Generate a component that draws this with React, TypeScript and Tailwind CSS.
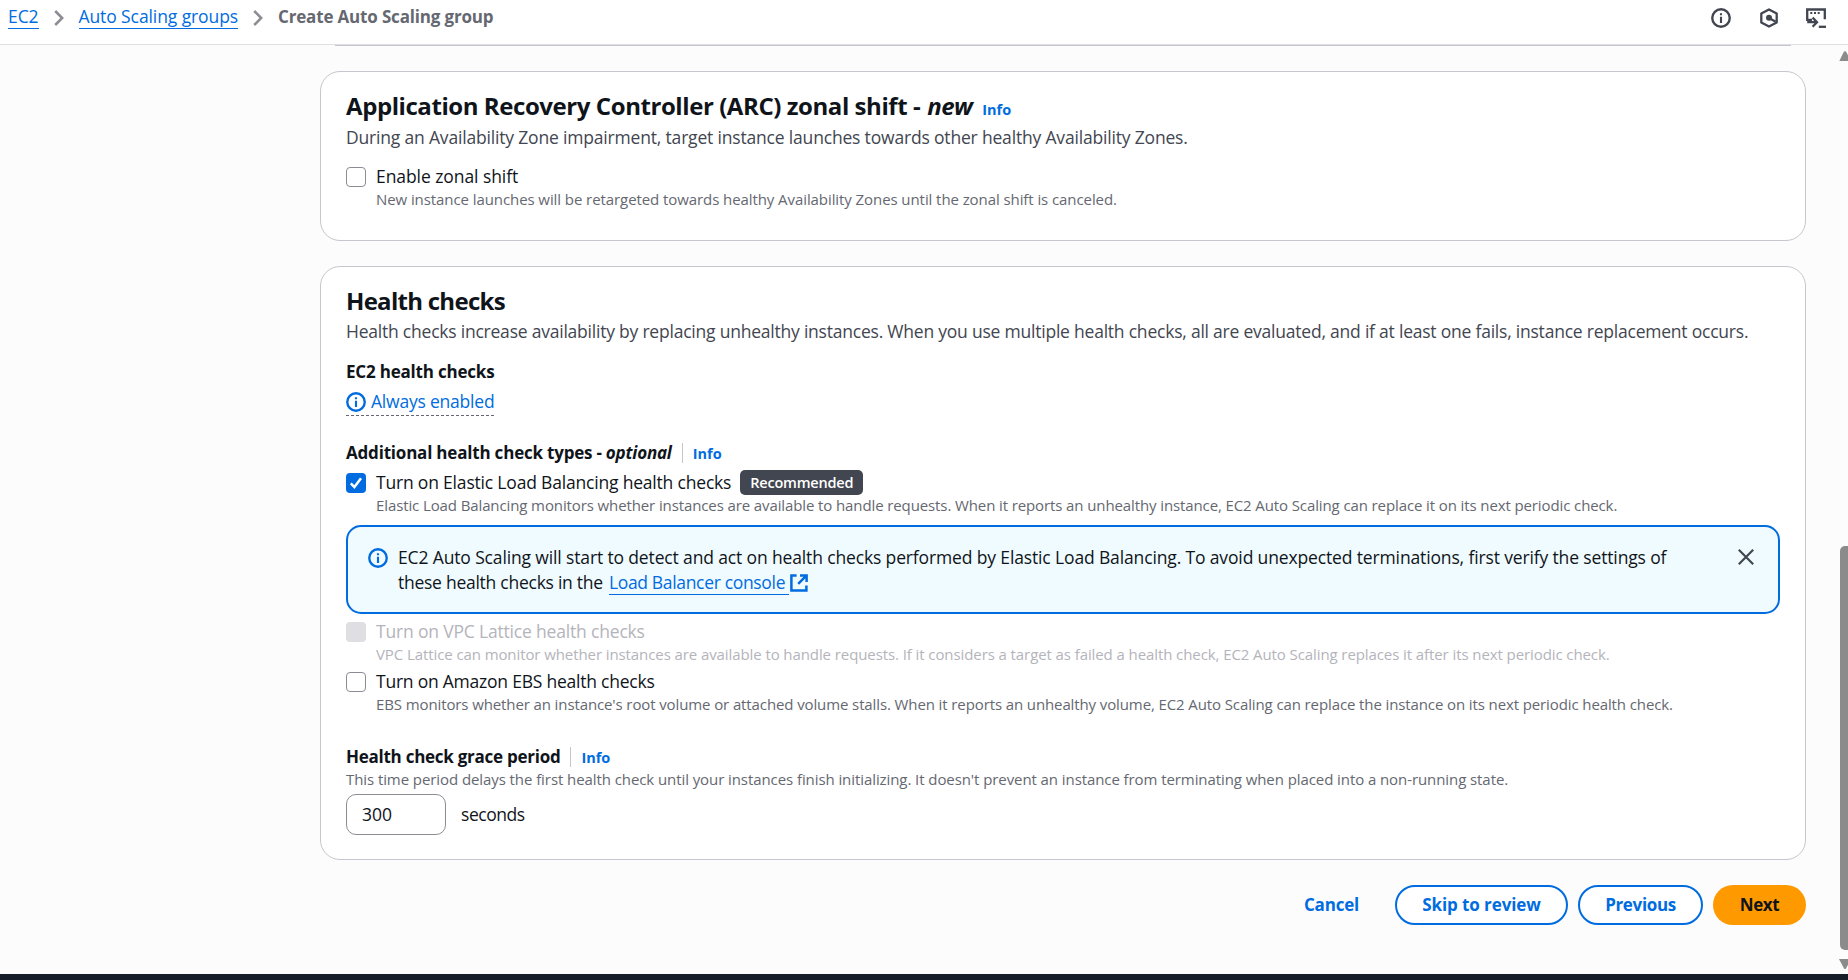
import React from 'react';
import type { ReactNode } from 'react';

const InfoIcon = ({ className }: { className: string }) => (
  <svg viewBox="0 0 16 16" fill="none" stroke="currentColor" strokeWidth="1.9" className={`shrink-0 ${className}`}>
    <circle cx="8" cy="8" r="7" />
    <path d="M8 7v4.9M8 4.1v1.7" strokeWidth="1.7" />
  </svg>
);

const HexagonIcon = () => (
  <svg viewBox="0 0 18 20" fill="none" stroke="currentColor" strokeWidth="2.3" className="h-5 w-[18px] shrink-0">
    <path d="M9 1.4 16.7 5.6v8.8L9 18.6 1.3 14.4V5.6z" strokeLinejoin="round" />
    <circle cx="9" cy="9.8" r="3" fill="currentColor" stroke="none" />
    <path d="m9.5 10.3 6.2 3.4" />
  </svg>
);

const ConsoleIcon = () => (
  <svg viewBox="0 0 20 20" fill="none" stroke="currentColor" strokeWidth="2.3" className="size-5 shrink-0">
    <path d="M6 11.8H1.2V1.5h17.6v9.7" />
    <path d="M4.3 5h2M8 5h2M11.7 5h2" strokeWidth="2" />
    <path d="M1.2 14.2h9M6.6 9.6l4.4 4.6-4.4 4.6" />
    <path d="M12.8 18.8H20" />
  </svg>
);

const ExternalIcon = () => (
  <svg viewBox="0 0 18 18" fill="none" stroke="currentColor" strokeWidth="2.5" className="size-[18px] shrink-0">
    <path d="M6.6 1.6H1.4v15h15v-5.2" />
    <path d="M10 1.4h6.6V8M16.3 1.7 8.2 9.8" />
  </svg>
);

const Chevron = () => (
  <svg viewBox="0 0 10 16" className="mt-1.5 h-4 w-2.5 shrink-0 self-start" fill="none" stroke="#8c8c94" strokeWidth="2.5">
    <path d="M1.2 1 8.2 8l-7 7" />
  </svg>
);

const InfoLink = () => <a className="text-[14.5px] font-bold text-[#006ce0]">Info</a>;

const Divider = () => <span className="h-5 w-px self-center bg-[#c6c6cd]" />;

function CheckRow({ state, label, desc, descClass, labelClass, badge }: {
  state: 'on' | 'off' | 'disabled';
  label: string;
  desc: string;
  descClass: string;
  labelClass: string;
  badge?: ReactNode;
}) {
  return (
    <div className="flex gap-2.5">
      {state === 'on' && (
        <span className="mt-1 size-5 shrink-0 rounded-[4px] bg-[#006ce0]">
          <svg viewBox="0 0 20 20" fill="none" stroke="#fff" strokeWidth="2.5">
            <path d="m4.8 10.4 3.6 3.7 6.6-8.8" />
          </svg>
        </span>
      )}
      {state === 'off' && <span className="mt-1 size-5 shrink-0 rounded-[4px] border border-[#8c8c94] bg-white" />}
      {state === 'disabled' && <span className="mt-1 size-5 shrink-0 rounded-[4px] bg-[#dedee3]" />}
      <div className={state === 'disabled' ? 'text-[#b4b4bb]' : 'text-[#656871]'}>
        <div className="flex h-[25px] items-start text-[17.5px] leading-[25px]">
          <span className={`pt-px ${labelClass} ${state === 'disabled' ? '' : 'text-[#0f141a]'}`}>{label}</span>
          {badge}
        </div>
        <p className={`mt-px text-[15px] leading-5 ${descClass}`}>{desc}</p>
      </div>
    </div>
  );
}

export default function App() {
  return (
    <div className="flex h-[980px] w-[1848px] flex-col overflow-hidden bg-[#fcfcfd] font-['Open_Sans','Noto_Sans',sans-serif] whitespace-nowrap text-[#0f141a]">
      <header className="flex h-[45px] shrink-0 items-start justify-between border-b border-[#dedee3] bg-white pt-1 pr-[22px] pl-2 text-[17.5px] leading-[25px]">
        <nav className="flex items-baseline">
          <a className="h-[25px] border-b border-[#006ce0] tracking-[-0.08px] text-[#006ce0]">EC2</a>
          <span className="flex w-[40px] justify-center self-start"><Chevron /></span>
          <a className="h-[25px] border-b border-[#006ce0] tracking-[-0.1px] text-[#006ce0]">Auto Scaling groups</a>
          <span className="flex w-10 justify-center self-start"><Chevron /></span>
          <span className="text-[17px] font-bold tracking-[-0.17px] text-[#656871]">Create Auto Scaling group</span>
        </nav>
        <div className="flex pt-1 text-[#424650]">
          <InfoIcon className="size-5" />
          <span className="mr-7 ml-[29px]"><HexagonIcon /></span>
          <ConsoleIcon />
        </div>
      </header>

      <div className="flex min-h-0 flex-1 justify-between">
        <main className="ml-[320px] w-[1486px]">
          <div className="mx-[15px] h-px bg-[#c6c6cd]" />

          <section className="mt-[25px] h-[170px] rounded-[20px] border border-[#c6c6cd] bg-white px-[25px] pt-[19px]">
            <div className="flex h-[30px] items-baseline text-[24px] leading-[30px] font-bold">
              <h2 className="tracking-[-0.43px]">Application Recovery Controller (ARC) zonal shift -</h2>
              <i className="mr-2.5 ml-[7px] tracking-[-0.6px]">new</i>
              <InfoLink />
            </div>
            <p className="mt-1 mb-[13px] text-[17.5px] leading-[25px] tracking-[-0.18px] text-[#424650]">
              During an Availability Zone impairment, target instance launches towards other healthy Availability Zones.
            </p>
            <CheckRow
              state="off"
              label="Enable zonal shift"
              labelClass="tracking-[-0.07px]"
              desc="New instance launches will be retargeted towards healthy Availability Zones until the zonal shift is canceled."
              descClass="tracking-[-0.08px]"
            />
          </section>

          <section className="mt-[25px] h-[594px] rounded-[20px] border border-[#c6c6cd] bg-white px-[25px] pt-[19px]">
            <h2 className="h-[30px] text-[24px] leading-[30px] font-bold tracking-[-0.72px]">Health checks</h2>
            <p className="mt-[3px] text-[17.5px] leading-[25px] tracking-[-0.22px] text-[#424650]">
              Health checks increase availability by replacing unhealthy instances. When you use multiple health checks, all are evaluated, and if at least one fails, instance replacement occurs.
            </p>

            <h3 className="mt-[15px] text-[17px] leading-[25px] font-bold tracking-[-0.2px]">EC2 health checks</h3>
            <div className="mt-[5px] flex h-[27px] w-[148px] items-start border-b border-dashed border-b-[#656871] text-[17.5px] leading-[25px] tracking-[-0.21px] text-[#006ce0]">
              <InfoIcon className="mt-[3px] mr-[5px] size-5" />
              Always enabled
            </div>

            <div className="mt-6 flex h-[25px] items-baseline text-[17px] leading-[25px] font-bold tracking-[-0.2px]">
              <h3>Additional health check types -</h3>
              <i className="mr-2.5 ml-1">optional</i>
              <Divider />
              <span className="ml-2.5 tracking-normal"><InfoLink /></span>
            </div>
            <div className="mt-1">
              <CheckRow
                state="on"
                label="Turn on Elastic Load Balancing health checks"
                labelClass="tracking-[-0.19px]"
                badge={
                  <span className="mt-px ml-[9px] flex h-[25px] w-[123px] items-center justify-center rounded-[5px] bg-[#424650] text-[14.5px] font-semibold tracking-[-0.2px] text-white">
                    Recommended
                  </span>
                }
                desc="Elastic Load Balancing monitors whether instances are available to handle requests. When it reports an unhealthy instance, EC2 Auto Scaling can replace it on its next periodic check."
                descClass="tracking-[-0.11px]"
              />
            </div>

            <div className="mt-2.5 flex h-[89px] items-start rounded-[15px] border-2 border-[#006ce0] bg-[#f0fbff] pt-[18px] pr-6 pl-5 text-[17.5px] leading-[25px]">
              <InfoIcon className="mt-[3px] mr-2.5 size-5 text-[#006ce0]" />
              <div className="flex-1">
                <p className="tracking-[-0.14px]">
                  EC2 Auto Scaling will start to detect and act on health checks performed by Elastic Load Balancing. To avoid unexpected terminations, first verify the settings of
                </p>
                <p className="flex tracking-[-0.26px]">
                  these health checks in the
                  <a className="ml-1.5 flex items-center tracking-[-0.33px] text-[#006ce0]">
                    <span className="h-[25px] border-b border-[#006ce0] pr-1">Load Balancer console</span>
                    <span className="ml-px"><ExternalIcon /></span>
                  </a>
                </p>
              </div>
              <svg viewBox="0 0 16 16" className="mt-1 size-4" fill="none" stroke="#424650" strokeWidth="2.2">
                <path d="m.8.8 14.4 14.4M15.2.8.8 15.2" />
              </svg>
            </div>

            <div className="mt-1 flex flex-col gap-1">
              <CheckRow
                state="disabled"
                label="Turn on VPC Lattice health checks"
                labelClass="tracking-[-0.18px]"
                desc="VPC Lattice can monitor whether instances are available to handle requests. If it considers a target as failed a health check, EC2 Auto Scaling replaces it after its next periodic check."
                descClass="tracking-[-0.09px]"
              />
              <CheckRow
                state="off"
                label="Turn on Amazon EBS health checks"
                labelClass="tracking-[-0.23px]"
                desc="EBS monitors whether an instance's root volume or attached volume stalls. When it reports an unhealthy volume, EC2 Auto Scaling can replace the instance on its next periodic health check."
                descClass="tracking-[-0.11px]"
              />
            </div>

            <div className="mt-[30px] flex h-[25px] items-baseline text-[17px] leading-[25px] font-bold">
              <h3 className="mr-2.5 tracking-[-0.26px]">Health check grace period</h3>
              <Divider />
              <span className="ml-2.5"><InfoLink /></span>
            </div>
            <p className="text-[15px] leading-5 tracking-[-0.08px] text-[#656871]">
              This time period delays the first health check until your instances finish initializing. It doesn't prevent an instance from terminating when placed into a non-running state.
            </p>
            <div className="mt-[5px] flex items-center text-[17.5px] leading-[25px]">
              <div className="mr-[15px] flex h-[41px] w-[100px] items-center rounded-[10px] border border-[#8c8c94] bg-white pl-[15px]">300</div>
              <span className="tracking-[-0.45px]">seconds</span>
            </div>
          </section>

          <div className="mt-[25px] flex h-10 justify-end gap-2.5 text-[17px] leading-[25px] font-bold text-[#006ce0]">
            <button className="mr-[26px] pb-px tracking-[-0.2px]">Cancel</button>
            <button className="w-[173px] rounded-full border-2 border-[#006ce0] bg-white pb-px tracking-[-0.1px]">Skip to review</button>
            <button className="w-[125px] rounded-full border-2 border-[#006ce0] bg-white pb-px tracking-[-0.35px]">Previous</button>
            <button className="w-[93px] rounded-full bg-[#ff9900] pb-px tracking-[-0.4px] text-[#0f141a]">Next</button>
          </div>
        </main>

        <div className="flex w-[9px] flex-col overflow-hidden">
          <svg viewBox="0 0 12 10" className="mt-1.5 h-2.5 w-3 shrink-0" fill="#8b8b8b">
            <path d="M5 .6Q6 0 7 .6L12 10H.3z" />
          </svg>
          <div className="mt-[485px] ml-px h-[404px] w-4 shrink-0 rounded-[5px] bg-[#8b8b8b]" />
          <svg viewBox="0 0 12 10" className="mt-[9px] h-2.5 w-3 shrink-0" fill="#8b8b8b">
            <path d="M0 0h12L7 9.4q-1 1-2 0z" />
          </svg>
        </div>
      </div>
      <div className="h-1.5 shrink-0 bg-[#161d26]" />
    </div>
  );
}
